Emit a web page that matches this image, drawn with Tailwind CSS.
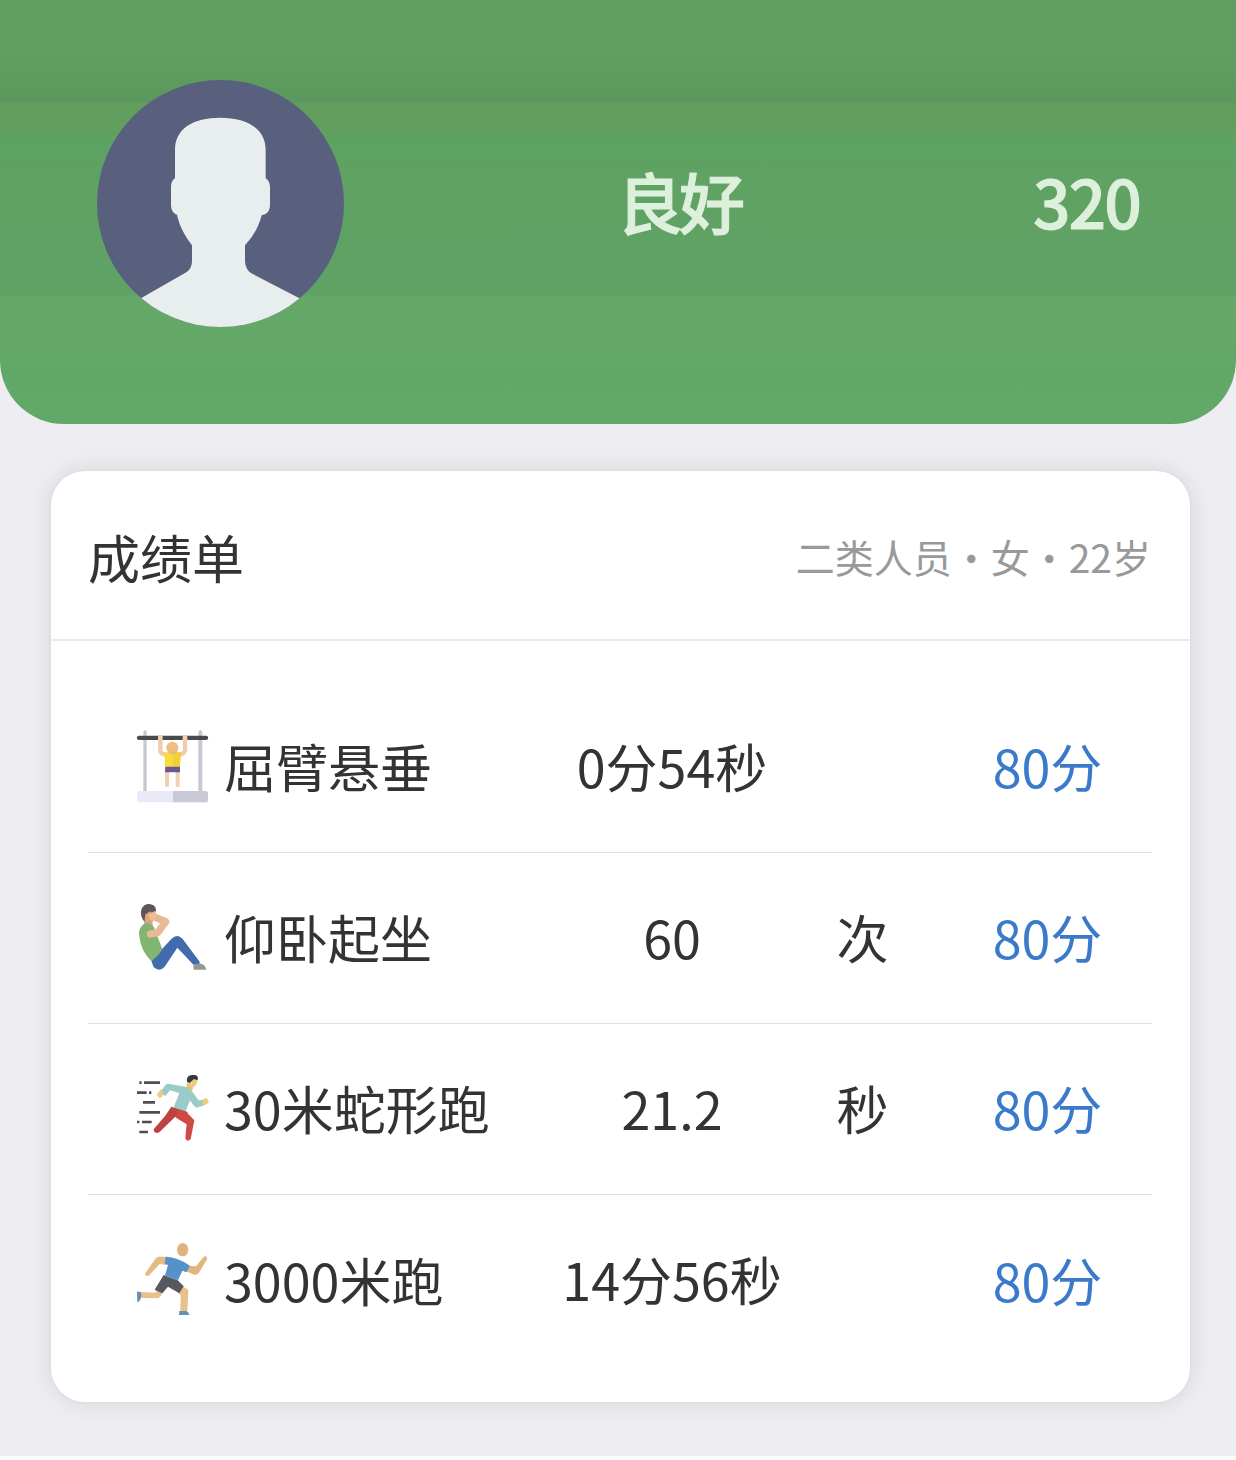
<!DOCTYPE html>
<html lang="zh-CN">
<head>
<meta charset="utf-8">
<title>成绩单</title>
<script src="https://cdn.jsdelivr.net/npm/@tailwindcss/browser@4"></script>
</head>
<body class="bg-white font-['Noto_Sans_CJK_SC',sans-serif] text-[#333]">
<div class="h-[1456px] bg-[#eeedf2]">
  <header class="flex h-[424px] rounded-b-[64px] bg-[linear-gradient(180deg,#609f61_0px,#609f61_50px,#5c985d_102px,#629e5e_104px,#619f5e_132px,#5ca363_142px,#5ea263_165px,#60a264_190px,#5fa265_294px,#65a868_297px,#64a867_350px,#61a867_370px,#62a868_424px)] pl-[97px] pt-20">
    <svg class="size-[247px] shrink-0" viewBox="51 60 741 741">
      <defs><clipPath id="round"><circle cx="421.500" cy="430.500" r="370.500"/></clipPath></defs>
      <g clip-path="url(#round)">
        <rect x="51" y="60" width="741" height="741" fill="#58607d"/>
        <path fill="#e8edee" d="M420 173C500 173 557 205 557 270V354C566 361 570 370 570 382V436C570 453 560 464 545 466C535 505 518 530 495 556V600C495 620 503 635 520 643L657 714L700 820H140L184 714L315 639C329 631 336 620 336 602V556C313 525 298 497 291 464C279 460 273 449 273 434V380C273 369 277 360 285 354V270C285 205 340 173 420 173Z"/>
      </g>
    </svg>
    <div class="ml-[273px] mt-[72px] flex text-[66px] font-medium leading-[96px] tracking-[-2px] text-[#dcf0dc] [-webkit-text-stroke:1px_#dcf0dc]">
      <div class="w-[416px] tracking-[-4px]">良好</div>
      <div>320</div>
    </div>
  </header>

  <main class="ml-[51px] mt-[47px] h-[931px] w-[1139px] rounded-[34px] bg-white shadow-[0_0_24px_rgba(0,0,0,0.11),0_0_3px_rgba(0,0,0,0.04)]">
    <div class="flex h-[170px] items-center justify-between border-b-2 border-[#ebebeb] pl-[37px] pr-[39px]">
      <h1 class="pt-1 text-[52px] leading-[78px]">成绩单</h1>
      <p class="pt-px text-[39px] leading-[58px] text-[#999]">二类人员・女・22岁</p>
    </div>
    <div class="ml-[37px] w-[1064px] pt-[41px] text-[52px] leading-[78px]">

      <div class="grid h-[171px] grid-cols-[425px_220px_161px_209px] items-center border-b border-[#dedfe0] pl-[49px]">
        <div class="flex items-center gap-[15px]">
          <svg class="size-[72px] overflow-visible" viewBox="36 48 216 216">
            <path d="M55 50Q60 40 65 50V230H55ZM220 50Q226 40 232 50V230H220Z" fill="#c9c7d0"/>
            <rect x="36" y="228" width="213" height="34" rx="8" fill="#ebe9f7"/>
            <path d="M144 228H241Q249 228 249 236V254Q249 262 241 262H144Z" fill="#cbc8d8"/>
            <path d="M106 68V107Q107 117 121 118M180 68V107Q178 117 164 118" fill="none" stroke="#f0cda9" stroke-width="13" stroke-linecap="round"/>
            <path d="M126 165V211M158 165V211" stroke="#f2cfb3" stroke-width="12" stroke-linecap="round"/>
            <path d="M118 112H168L164 158H121Z" fill="#f8dc3d"/>
            <path d="M145 112H168L164 158H145Z" fill="#f0d038"/>
            <path d="M121 155H165V172H120Z" fill="#6c5794"/>
            <ellipse cx="142" cy="99" rx="18" ry="19" fill="#edbf82"/>
            <path d="M130 112Q143 125 155 112V107H130Z" fill="#eabd77"/>
            <rect x="36" y="62" width="213" height="13" rx="5" fill="#484b4e"/>
            <path d="M99 64Q106 58 113 64V76H99ZM173 64Q180 58 187 64V76H173Z" fill="#f1d2b4"/>
          </svg>
          <span class="pb-0.5">屈臂悬垂</span>
        </div>
        <div class="pb-[3px] text-center">0分54秒</div><div></div><div class="pb-0.5 text-center text-[#3b7acb]">80分</div>
      </div>

      <div class="grid h-[171px] grid-cols-[425px_220px_161px_209px] items-center border-b border-[#dedfe0] pl-[49px]">
        <div class="flex items-center gap-[15px]">
          <svg class="size-[72px] overflow-visible" viewBox="36 36 216 216">
            <path d="M57 94C39 70 49 41 73 42C91 44 96 57 91 67L77 91L65 99Z" fill="#5e5656"/>
            <path d="M61 73L76 64L90 77L82 98L84 108L57 104Z" fill="#dba580"/>
            <path d="M79 213L108 181L139 147Q157 129 173 147L224 215Q226 228 206 225L157 173L119 230Q104 247 86 232Z" fill="#416bad"/>
            <path d="M43 139Q38 117 57 101Q73 95 87 112L112 178Q101 199 79 213Q47 183 43 139Z" fill="#80b572"/>
            <path d="M76 132L98 128L122 95L91 82" fill="none" stroke="#e8b996" stroke-width="22" stroke-linecap="round" stroke-linejoin="round"/>
            <path d="M68 75L89 63Q100 73 91 86L78 92Z" fill="#ecbd98"/>
            <path d="M207 222L229 221Q242 226 244 239H206Q203 228 207 222Z" fill="#969697"/>
          </svg>
          <span class="pb-0.5">仰卧起坐</span>
        </div>
        <div class="pb-[3px] text-center">60</div><div class="pb-0.5 text-center">次</div><div class="pb-0.5 text-center text-[#3b7acb]">80分</div>
      </div>

      <div class="grid h-[171px] grid-cols-[425px_220px_161px_209px] items-center border-b border-[#dedfe0] pl-[49px]">
        <div class="flex items-center gap-[15px]">
          <svg class="size-[72px] overflow-visible" viewBox="36 39 216 216">
            <path d="M43 68H50M57 68H105M36 98H65M72 98H79M54 127H90M43 157H105M36 186H43M51 186H80M43 216H69" stroke="#4e4e4e" stroke-width="8"/>
            <path d="M196 71L192 91" stroke="#eac076" stroke-width="20"/>
            <path d="M186 62L217 53Q219 74 205 81Q191 80 186 62Z" fill="#f2ca83"/>
            <path d="M186 65Q183 44 204 45Q218 43 219 55L217 61L207 57L193 69Z" fill="#303943"/>
            <path d="M112 96L105 104M231 130L242 124" stroke="#f0ca7e" stroke-width="17" stroke-linecap="round"/>
            <path d="M112 91Q119 71 130 71L181 80Q194 85 202 95L221 121L231 120Q237 131 230 138L216 143Q209 142 201 130L195 121L181 155L146 142L163 100L135 91L121 108Q111 104 112 91Z" fill="#99cbc8"/>
            <path d="M139 140L188 156L181 174L150 171L103 217Q87 223 86 208L122 166Z" fill="#bd4241"/>
            <path d="M159 150L184 156L208 181L197 238Q185 248 181 234L185 193L153 173Z" fill="#cd4a45"/>
          </svg>
          <span class="pb-0.5">30米蛇形跑</span>
        </div>
        <div class="pb-[3px] text-center">21.2</div><div class="pb-0.5 text-center">秒</div><div class="pb-0.5 text-center text-[#3b7acb]">80分</div>
      </div>

      <div class="grid h-[171px] grid-cols-[425px_220px_161px_209px] items-center pl-[49px]">
        <div class="flex items-center gap-[15px]">
          <svg class="size-[72px] overflow-visible" viewBox="36 44 216 216">
            <ellipse cx="173" cy="58" rx="17" ry="20" fill="#dfb280"/>
            <path d="M127 79H101Q95 79 90 87L60 130Q61 139 70 137L104 101L123 103Z" fill="#e5ba83"/>
            <path d="M184 106L213 108L235 81Q244 73 247 85L222 127Q217 134 208 133L180 121Z" fill="#e1b57e"/>
            <path d="M122 79Q158 80 195 106L184 126L172 121L159 150L120 135L129 104L119 101Z" fill="#5591cb"/>
            <path d="M97 176L91 187L47 185V203L97 204Q105 203 114 186ZM167 165L190 178L187 244H166L167 194L151 180Z" fill="#e8c08c"/>
            <path d="M116 134L158 150L176 168L163 189L129 169L112 189L89 178Z" fill="#55585d"/>
            <path d="M36 184H47Q52 195 47 205Q44 215 37 216ZM163 242H184Q193 246 193 254H162Z" fill="#6490b5"/>
          </svg>
          <span class="pb-0.5">3000米跑</span>
        </div>
        <div class="pb-[3px] text-center">14分56秒</div><div></div><div class="pb-0.5 text-center text-[#3b7acb]">80分</div>
      </div>
    </div>
  </main>
</div>
</body>
</html>
